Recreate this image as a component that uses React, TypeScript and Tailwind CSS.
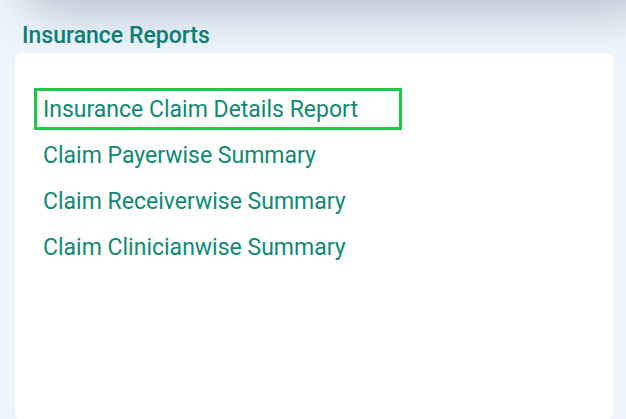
import React from "react";

const reports = [
  "Insurance Claim Details Report",
  "Claim Payerwise Summary",
  "Claim Receiverwise Summary",
  "Claim Clinicianwise Summary",
];

export default function App() {
  return (
    <div className="relative min-h-screen h-[419px] overflow-hidden bg-[#eef5fd] font-['Roboto',sans-serif]">
      {/* shadow cast by the header bar sitting just above the viewport */}
      <div className="absolute -top-[60px] left-[24px] -right-[20px] h-[60px] rounded-bl-[30px] bg-[#e4e8ef] shadow-[0_10px_50px_rgba(120,128,148,0.5)]" />

      <div className="relative flex flex-col h-full pt-[21px]">
        <h2 className="pl-[22px] text-[23px] leading-[29px] font-medium text-[#0b7f72]">
          Insurance Reports
        </h2>
        <div className="ml-[15px] mr-[13px] mt-[3px] flex-1 rounded-[6px] bg-white pt-[35px] pl-[19px]">
          <ul className="flex flex-col gap-[4px]">
            {reports.map((r, i) => (
              <li key={r}>
                <a
                  href="#"
                  className={`inline-flex items-center h-[42px] w-[368px] pl-[6px] pt-[2px] text-[23px] text-[#0e8a72] border-[3px] ${
                    i === 0 ? "border-[#1dc946]" : "border-transparent"
                  }`}
                >
                  {r}
                </a>
              </li>
            ))}
          </ul>
        </div>
      </div>
    </div>
  );
}
